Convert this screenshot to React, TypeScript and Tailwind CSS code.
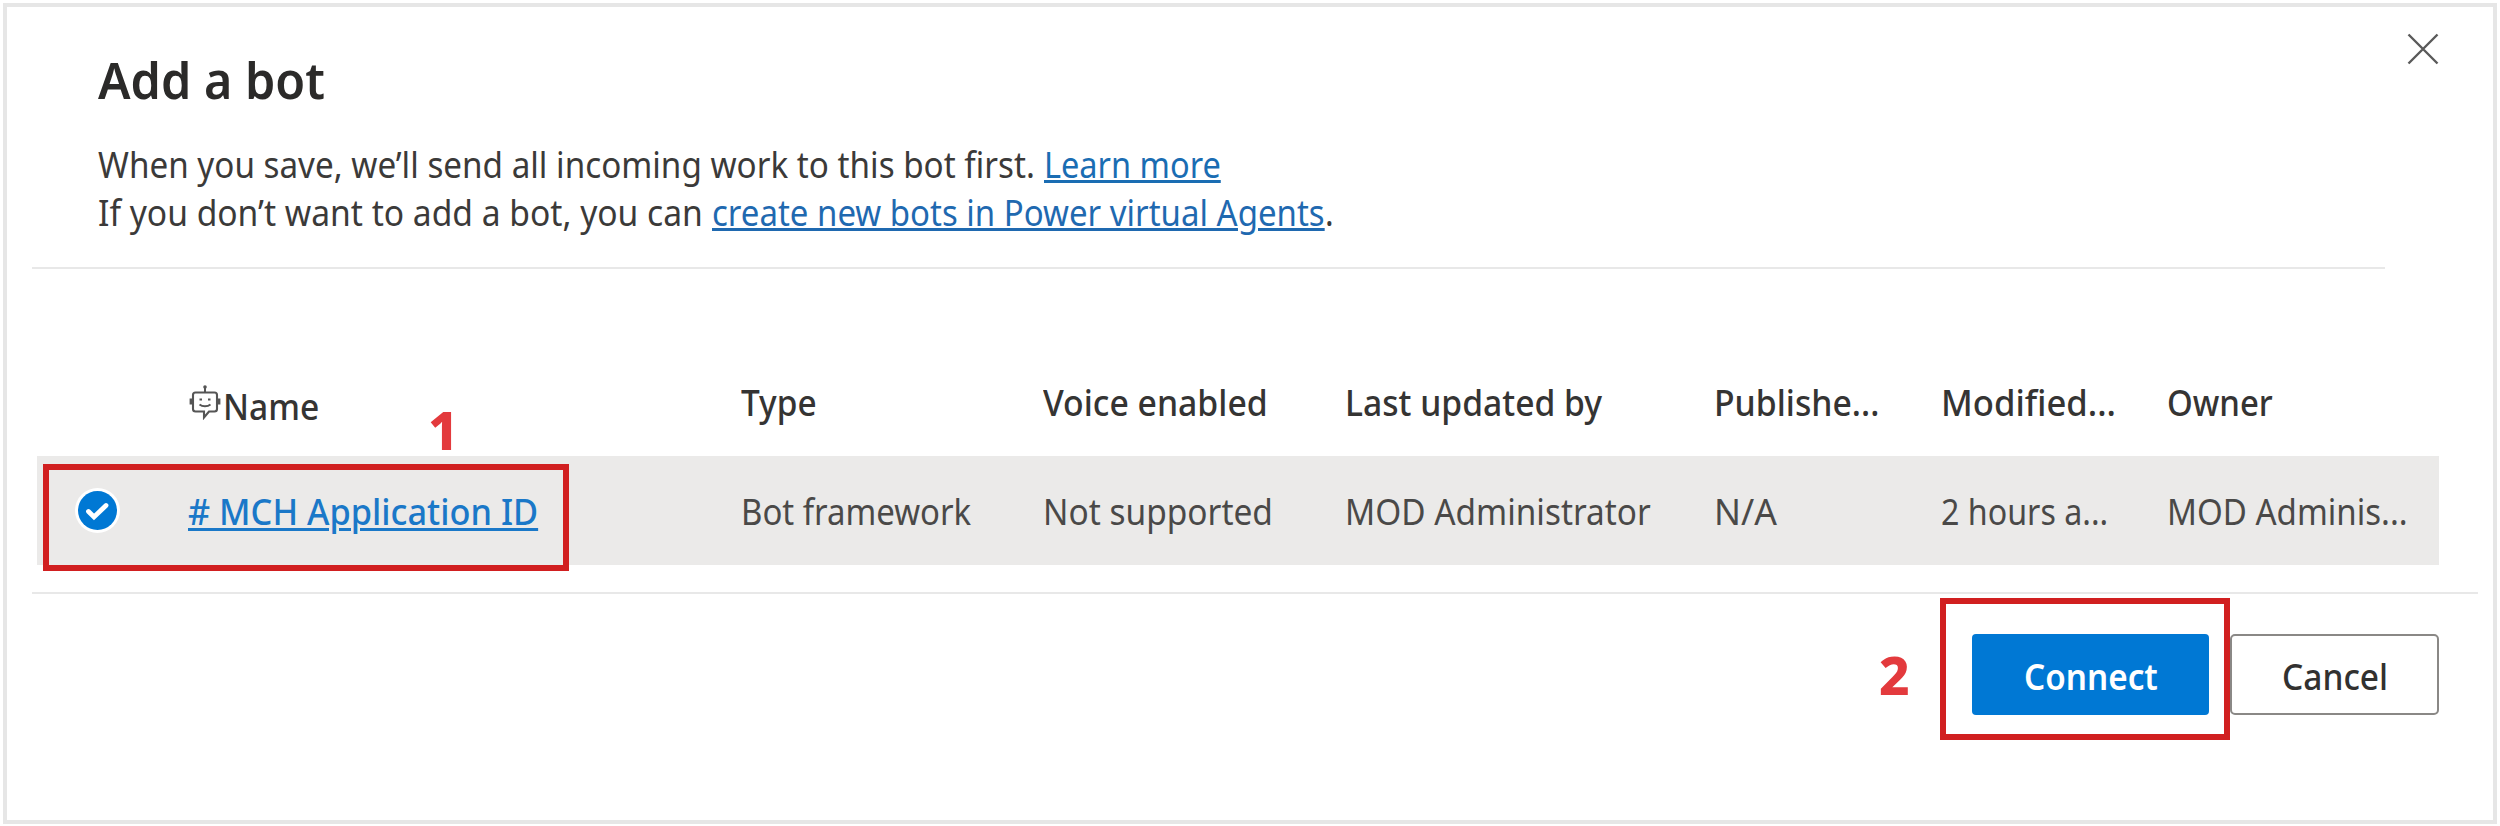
import { useLayoutEffect, useRef, useState } from "react";

type FitProps = { text: string; width: number; className?: string };

/* One line of text, condensed horizontally to a given width. */
function Fit({ text, width, className = "" }: FitProps) {
  const ref = useRef<HTMLSpanElement>(null);
  const [scale, setScale] = useState(1);
  useLayoutEffect(() => {
    if (ref.current) setScale(width / ref.current.offsetWidth);
  }, [width, text]);
  return (
    <span className="block shrink-0" style={{ width }}>
      <span
        ref={ref}
        className={`inline-block origin-left whitespace-pre align-top ${className}`}
        style={{ transform: `scaleX(${scale})` }}
      >
        {text}
      </span>
    </span>
  );
}

function BotIcon() {
  return (
    <svg className="h-[36px] w-[32px] shrink-0" viewBox="0 0 32 36" fill="none" stroke="#555" strokeWidth="2">
      <circle cx="16" cy="3" r="1.8" fill="#555" stroke="none" />
      <path d="M16 3v6" />
      <path d="M6.500 8.500h19a2.500 2.500 0 0 1 2.500 2.500v14a2.500 2.500 0 0 1-2.500 2.500h-5.500l-5 6v-6h-8.500a2.500 2.500 0 0 1-2.500-2.500v-14a2.500 2.500 0 0 1 2.500-2.500z" strokeWidth="2.100" />
      <path d="M2 14.500v6M30 14.500v6" strokeWidth="2.800" />
      <path d="M10.500 15.500h2.500M19 15.500h2.500" strokeWidth="2" />
      <path d="M10.500 20.500c3 2.400 8 2.400 11 0" strokeWidth="2" />
    </svg>
  );
}

const columns: { head: string; headWidth: number; cell: string; cellWidth: number }[] = [
  { head: "Type", headWidth: 76, cell: "Bot framework", cellWidth: 230 },
  { head: "Voice enabled", headWidth: 225, cell: "Not supported", cellWidth: 230 },
  { head: "Last updated by", headWidth: 257, cell: "MOD Administrator", cellWidth: 306 },
  { head: "Publishe...", headWidth: 165, cell: "N/A", cellWidth: 63 },
  { head: "Modified...", headWidth: 175, cell: "2 hours a...", cellWidth: 167 },
  { head: "Owner", headWidth: 106, cell: "MOD Adminis...", cellWidth: 241 },
];

const grid = "grid grid-cols-[151px_553px_302px_302px_369px_227px_226px_272px]";

export default function App() {
  return (
    <div className="h-[826px] w-[2500px] bg-white p-[3px] pb-[2px] font-['Noto_Sans','Open_Sans',sans-serif]">
      <div className="relative flex h-full w-full flex-col border-4 border-[#e6e6e6] bg-white">
        <div className="flex items-start justify-between pt-[26px] pr-[54px] pl-[91px]">
          <header className="pt-[17px]">
            <h1 className="text-[50px] leading-[60px] font-semibold text-[#2b2a29]">
              <Fit text="Add a bot" width={227} />
            </h1>
            <div className="mt-[31px] text-[36px] leading-[48px] text-[#3b3a39]">
              <div className="flex">
                <Fit text="When you save, we’ll send all incoming work to this bot first. " width={946} />
                <Fit text="Learn more" width={177} className="text-[#1a6db3] underline decoration-[2.5px] underline-offset-[2px]" />
              </div>
              <div className="flex">
                <Fit text="If you don’t want to add a bot, you can " width={614} />
                <Fit text="create new bots in Power virtual Agents" width={613} className="text-[#1f69b0] underline decoration-[2.5px] underline-offset-[2px]" />
                <Fit text="." width={9} />
              </div>
            </div>
          </header>
          <button aria-label="Close" className="block">
            <svg className="h-[32px] w-[32px]" viewBox="0 0 32 32" stroke="#5a5a5a" strokeWidth="2.400">
              <path d="M1.500 1.500l29 29M30.500 1.500l-29 29" />
            </svg>
          </button>
        </div>

        <div className="mt-[30px] mr-[108px] ml-[25px] h-[2px] bg-[#e8e8e8]" />

        <section className="mt-[109px] ml-[30px] w-[2402px]">
          <div className={`${grid} h-[78px] pt-px text-[36px] leading-[48px] font-medium text-[#353433]`}>
            <span />
            <div className="flex items-start gap-[3px] pl-px">
              <div className="pt-[5px]">
                <BotIcon />
              </div>
              <div className="-ml-[1px] pt-1">
                <Fit text="Name" width={96} />
              </div>
            </div>
            {columns.map((c) => (
              <Fit key={c.head} text={c.head} width={c.headWidth} />
            ))}
          </div>
          <div className={`${grid} h-[109px] items-center bg-[#ebeae9] text-[35.5px] leading-[48px] text-[#4a4948]`}>
            <div className="flex pl-[38px]">
              <span className="flex size-[45px] items-center justify-center rounded-full bg-white">
                <svg className="size-[39px]" viewBox="0 0 39 39" fill="none">
                  <circle cx="19.500" cy="19.500" r="19.500" fill="#0078d4" />
                  <path d="M10.500 20.500l5.500 5.500L28 14.500" stroke="#fff" strokeWidth="4.800" strokeLinecap="round" />
                </svg>
              </span>
            </div>
            <Fit text="# MCH Application ID" width={350} className="font-medium text-[#1a78c8] underline decoration-[2.5px] underline-offset-[3px]" />
            {columns.map((c) => (
              <Fit key={c.cell} text={c.cell} width={c.cellWidth} />
            ))}
          </div>
        </section>

        <div className="mt-[27px] mr-[15px] ml-[25px] h-[2px] bg-[#e8e8e8]" />

        <footer className="mt-[40px] mr-[54px] flex justify-end gap-[21px] text-[36px] leading-[48px]">
          <button className="flex h-[81px] w-[237px] justify-center rounded-[4px] bg-[#0078d4] pt-[19px] font-semibold text-white">
            <Fit text="Connect" width={134} />
          </button>
          <button className="flex h-[81px] w-[209px] justify-center rounded-[5px] border-2 border-[#8a8886] bg-white pt-[17px] font-medium text-[#323130]">
            <Fit text="Cancel" width={106} />
          </button>
        </footer>

        {/* Numbered step markers */}
        <div className="absolute top-[457px] left-[36px] h-[107px] w-[526px] border-[6px] border-[#d11f20]" />
        <div className="absolute top-[591px] left-[1933px] h-[142px] w-[290px] border-[6px] border-[#d11f20]" />
        <div className="absolute top-[393px] left-[421px] text-[53px] leading-[60px] font-extrabold text-[#e33a3d]">1</div>
        <div className="absolute top-[638px] left-[1872px] text-[53px] leading-[60px] font-extrabold text-[#e33a3d]">2</div>
      </div>
    </div>
  );
}
